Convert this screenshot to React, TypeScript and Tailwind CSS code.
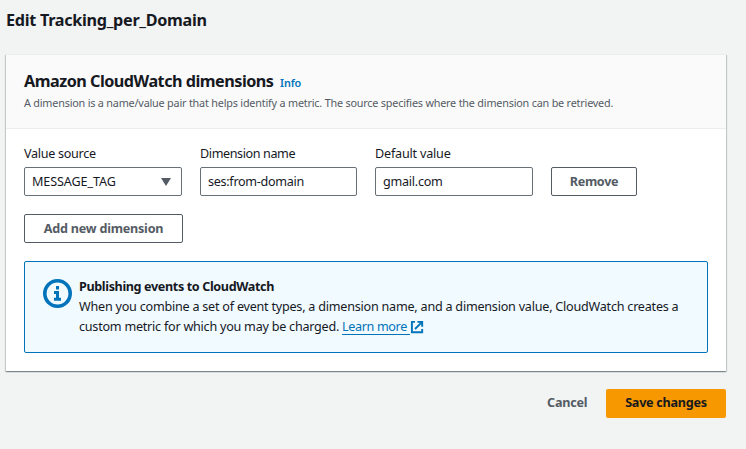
import React from "react";

const fieldBox =
  "flex h-[29px] items-center rounded-[2px] border border-[#687078] bg-white px-[7px] text-[12.6px]";
const outlineButton =
  "flex h-[29px] items-center justify-center whitespace-nowrap rounded-[2px] border border-[#545b64] bg-white pt-px text-[12.6px] font-bold text-[#545b64]";

function InfoIcon() {
  return (
    <svg width="30" height="30" viewBox="0 0 30 30" fill="none" className="block shrink-0">
      <circle cx="14.5" cy="14.5" r="12.7" stroke="#0073bb" strokeWidth="3.6" />
      <path d="M13 7h3v3.4h-3z M11 12h5v6.8h2v3h-7v-3h2v-3.8h-2z" fill="#0073bb" />
    </svg>
  );
}

function ExternalIcon() {
  return (
    <svg width="14" height="14" viewBox="0 0 14 14" fill="none" stroke="#0073bb" strokeWidth="1.9" className="block">
      <path d="M5 1.9H1.9v10.3h10.3V9" />
      <path d="M7.4 1.9h4.8v4.8M12 2.1L5 9" />
    </svg>
  );
}

export default function App() {
  return (
    <div className="h-[449px] w-[746px] overflow-hidden bg-[#f2f3f3] pl-1.5 pr-5 pt-2 font-['Noto_Sans','Open_Sans',sans-serif] text-[#16191f]">
      <h1 className="h-[46px] whitespace-nowrap text-[16.2px] font-bold leading-6">
        <span className="tracking-[-0.29px]">Edit Tracking_per_Domain</span>
      </h1>

      <section className="h-[317px] border-t border-[#eaeded] bg-white shadow-[0_1px_1px_0_rgba(0,28,36,0.3),1px_1px_1px_0_rgba(0,28,36,0.15),-1px_1px_1px_0_rgba(0,28,36,0.15)]">
        <header className="h-[74px] whitespace-nowrap border-b border-[#eaeded] bg-[#fafafa] px-[18px] pt-[14px]">
          <div className="flex h-6 items-baseline leading-6">
            <h2 className="w-[256px] text-[16.2px] font-bold">
              <span className="tracking-[-0.5px]">Amazon CloudWatch dimensions</span>
            </h2>
            <a className="text-[10.8px] font-semibold text-[#0073bb]">
              <span className="tracking-[-0.1px]">Info</span>
            </a>
          </div>
          <p className="text-[10.8px] leading-5 text-[#545b64]">
            <span className="tracking-[-0.19px]">
              A dimension is a name/value pair that helps identify a metric. The source specifies where the dimension can be retrieved.
            </span>
          </p>
        </header>

        <div className="px-[18px] pt-[15px]">
          <div className="flex items-end">
            <label className="mr-[18px] block w-[158px] whitespace-nowrap text-[12.6px] leading-5">
              <span className="tracking-[-0.3px]">Value source</span>
              <div className={`${fieldBox} mt-[3px] justify-between`}>
                <span className="tracking-[-0.1px]">MESSAGE_TAG</span>
                <svg width="10" height="8" viewBox="0 0 10 8" className="mr-[3px]">
                  <path d="M0 0h10L5 8z" fill="#545b64" />
                </svg>
              </div>
            </label>
            <label className="mr-[18px] block w-[157px] whitespace-nowrap text-[12.6px] leading-5">
              <span className="tracking-[-0.4px]">Dimension name</span>
              <div className={`${fieldBox} mt-[3px]`}>
                <span className="tracking-[-0.3px]">ses:from-domain</span>
              </div>
            </label>
            <label className="mr-[18px] block w-[158px] whitespace-nowrap text-[12.6px] leading-5">
              <span className="tracking-[-0.2px]">Default value</span>
              <div className={`${fieldBox} mt-[3px]`}>
                <span className="tracking-[-0.25px]">gmail.com</span>
              </div>
            </label>
            <button className={`${outlineButton} w-[86px]`}>
              <span className="tracking-[-0.3px]">Remove</span>
            </button>
          </div>

          <button className={`${outlineButton} mt-[18px] w-[159px]`}>
            <span className="tracking-[-0.22px]">Add new dimension</span>
          </button>

          <div className="mt-[18px] flex h-[92px] whitespace-nowrap rounded-[2px] border border-[#0073bb] bg-[#f1faff] pl-[18px] pt-[15px]">
            <div className="mr-[6px] mt-[1.5px]">
              <InfoIcon />
            </div>
            <div className="text-[12.6px] leading-5">
              <div className="font-bold">
                <span className="tracking-[-0.37px]">Publishing events to CloudWatch</span>
              </div>
              <div>
                <span className="tracking-[-0.23px]">
                  When you combine a set of event types, a dimension name, and a dimension value, CloudWatch creates a
                </span>
              </div>
              <div className="flex">
                <span className="w-[263px] tracking-[-0.24px]">custom metric for which you may be charged.</span>
                <a className="flex h-[18px] w-[68px] border-b border-[#0073bb] text-[#0073bb]">
                  <span className="tracking-[-0.35px]">Learn more</span>
                </a>
                <div className="mt-[3px]">
                  <ExternalIcon />
                </div>
              </div>
            </div>
          </div>
        </div>
      </section>

      <footer className="mt-[18px] flex items-center justify-end text-[12.6px] font-bold">
        <button className="mr-[19px] w-10 whitespace-nowrap text-[#545b64]">
          <span className="tracking-[-0.2px]">Cancel</span>
        </button>
        <button className="h-[29px] w-[120px] whitespace-nowrap rounded-[2px] bg-[#f79800]">
          <span className="tracking-[-0.25px]">Save changes</span>
        </button>
      </footer>
    </div>
  );
}
